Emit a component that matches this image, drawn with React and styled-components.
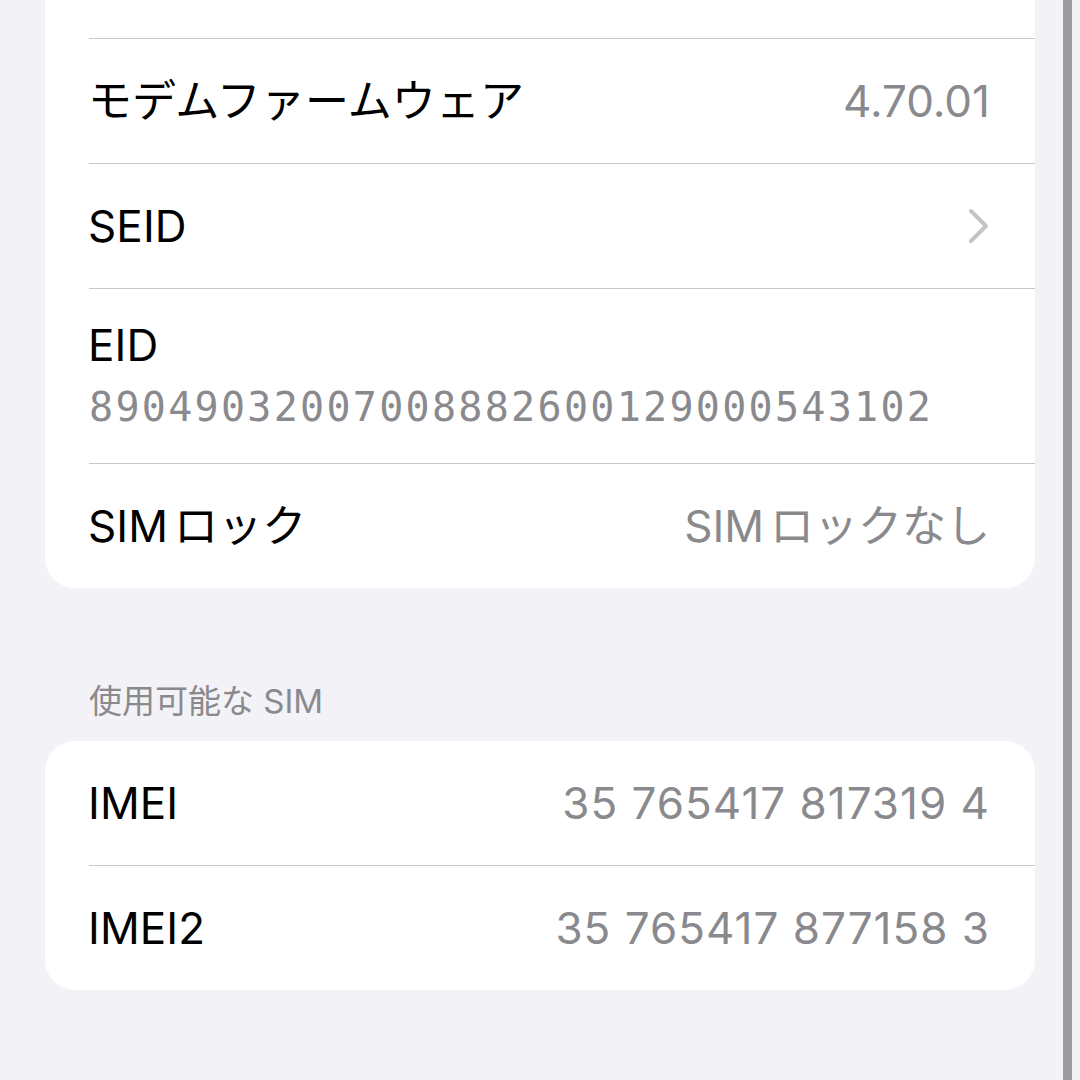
import React from 'react';
import styled, { createGlobalStyle } from 'styled-components';

const sans = `Inter, "Noto Sans CJK JP", sans-serif`;
const mono = `"DejaVu Sans Mono", "Liberation Mono", monospace`;
const grey = '#8a8a8e';

const Global = createGlobalStyle`
  html, body {
    margin: 0;
    padding: 0;
    background: #f2f2f7;
    overflow: hidden;
  }
  body {
    font-family: ${sans};
  }
`

const Screen = styled.div`
  display: flex;
  width: 1080px;
  height: 1080px;
  overflow: hidden;
  background: #f2f2f7;
`
const Main = styled.div`
  width: 1063px;
  padding: 0 28px 0 45px;
  box-sizing: border-box;
  display: flex;
  flex-direction: column;
`
const Frame = styled.div`
  width: 9px;
  background: #9c9ca1;
`
const Card = styled.div`
  background: #fff;
  border-radius: 30px;
  overflow: hidden;
  margin-top: ${({ $clipped }) => ($clipped ? '-86px' : '0')};
`
const Row = styled.div`
  display: flex;
  align-items: center;
  justify-content: space-between;
  height: ${({ $tall }) => ($tall ? '174px' : '124px')};
  margin-left: 44px;
  padding-right: 45px;
  border-bottom: ${({ $last }) => ($last ? 'none' : '1px solid #c8c8cc')};
`
const Stack = styled.div`
  display: flex;
  flex-direction: column;
  gap: 6px;
`
const Label = styled.div`
  margin-left: -1px;
  font-size: 44px;
  line-height: 56px;
  color: #000;
  letter-spacing: 0.1px;
`
const Value = styled.div`
  font-size: 44px;
  line-height: 56px;
  color: ${grey};
  letter-spacing: ${({ $spacing }) => $spacing || '0px'};
`
const Latin = styled.span`
  margin-right: ${({ $gap }) => $gap || '6px'};
`
const Serial = styled.div`
  font-family: ${mono};
  font-size: 40px;
  line-height: 56px;
  letter-spacing: 2.3px;
  color: ${grey};
  font-variant-numeric: slashed-zero;
`
const Chevron = styled.svg`
  width: 22px;
  height: 36px;
  display: block;
`
const SectionHeader = styled.div`
  padding: 90px 0 17px 44px;
  font-size: 33px;
  line-height: 46px;
  color: ${grey};
`

const ChevronIcon = () => (
  <Chevron viewBox="0 0 22 36">
    <polyline
      points="3,3 18,18 3,33"
      fill="none"
      stroke="#c4c4c7"
      strokeWidth="4"
      strokeLinecap="round"
      strokeLinejoin="round"
    />
  </Chevron>
)

export default function App() {
  return (
    <Screen>
      <Global />
      <Main>
        <Card $clipped>
          <Row />
          <Row>
            <Label>モデムファームウェア</Label>
            <Value>4.70.01</Value>
          </Row>
          <Row>
            <Label>SEID</Label>
            <ChevronIcon />
          </Row>
          <Row $tall>
            <Stack>
              <Label>EID</Label>
              <Serial>89049032007008882600129000543102</Serial>
            </Stack>
          </Row>
          <Row $last>
            <Label><Latin>SIM</Latin>ロック</Label>
            <Value><Latin>SIM</Latin>ロックなし</Value>
          </Row>
        </Card>

        <SectionHeader>使用可能な<Latin $gap="0"> SIM</Latin></SectionHeader>

        <Card>
          <Row>
            <Label>IMEI</Label>
            <Value $spacing="1px">35 765417 817319 4</Value>
          </Row>
          <Row $last>
            <Label>IMEI2</Label>
            <Value $spacing="1px">35 765417 877158 3</Value>
          </Row>
        </Card>
      </Main>
      <Frame />
    </Screen>
  );
}
